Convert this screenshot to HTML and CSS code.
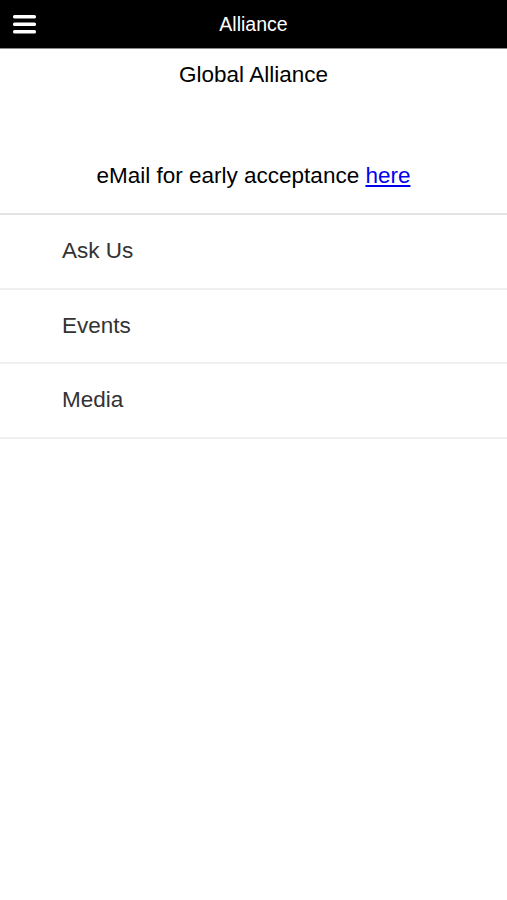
FILE: index.html
```html
<!DOCTYPE html>
<html lang="en">
<head>
  <meta charset="UTF-8" />
  <meta name="viewport" content="width=device-width, initial-scale=1.0" />
  <title>Alliance</title>
  <link rel="stylesheet" href="styles.css">
</head>
<body>
  <header class="topbar">
    <button class="menu-btn" aria-label="Menu">
      <svg width="24" height="20" viewBox="0 0 24 20">
        <rect x="0" y="1" width="23" height="3.5" rx="1.5" fill="#fff" />
        <rect x="0" y="8.5" width="23" height="3.5" rx="1.5" fill="#fff" />
        <rect x="0" y="16" width="23" height="3.5" rx="1.5" fill="#fff" />
      </svg>
    </button>
    <div class="topbar-title">Alliance</div>
  </header>

  <main>
    <h1 class="page-title">Global Alliance</h1>
    <p class="notice">eMail for early acceptance <a href="#">here</a></p>

    <ul class="menu-list">
      <li><a href="#">Ask Us</a></li>
      <li><a href="#">Events</a></li>
      <li><a href="#">Media</a></li>
    </ul>
  </main>
</body>
</html>
```

FILE: styles.css
```css
body {
  font-family: 'Liberation Sans', Arial, Helvetica, sans-serif;
  margin: 0;
  background: #fff;
  color: #000;
}

.topbar {
  position: relative;
  height: 48px;
  background: #000;
  border-bottom: 1px solid #8a8a8a;
  display: flex;
  align-items: center;
  justify-content: center;
}

.menu-btn {
  position: absolute;
  left: 13px;
  top: 14px;
  padding: 0;
  border: none;
  background: none;
  line-height: 0;
  cursor: pointer;
}

.topbar-title {
  color: #fff;
  font-size: 19.5px;
}

.page-title {
  margin: 13px 0 0;
  font-size: 22.5px;
  font-weight: normal;
  line-height: 26px;
  text-align: center;
}

.notice {
  margin: 75px 0 0;
  font-size: 22.5px;
  line-height: 26px;
  text-align: center;
}

.notice a {
  color: #0000ee;
}

.menu-list {
  list-style: none;
  margin: 24px 0 0;
  padding: 0;
  border-top: 2px solid #e4e4e4;
}

.menu-list li {
  border-bottom: 2px solid #f0f0f0;
}

.menu-list a {
  display: flex;
  align-items: center;
  height: 72.5px;
  padding-left: 62px;
  font-size: 22.5px;
  color: #333;
  text-decoration: none;
}
```
